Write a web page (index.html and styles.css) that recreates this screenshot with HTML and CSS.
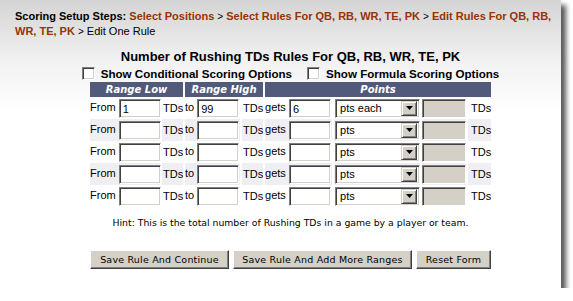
FILE: index.html
```html
<!DOCTYPE html>
<html>
<head>
<meta charset="utf-8">
<title>Edit One Rule</title>
<link rel="stylesheet" href="styles.css">
</head>
<body>
<div class="panel">
  <div class="steps">
    <b class="steps-label">Scoring Setup Steps:</b>
    <a class="step" href="#">Select Positions</a> <span class="sep">&gt;</span>
    <a class="step" href="#">Select Rules For QB, RB, WR, TE, PK</a> <span class="sep">&gt;</span>
    <a class="step" href="#">Edit Rules For QB, RB, WR, TE, PK</a> <span class="sep">&gt;</span>
    <span class="current">Edit One Rule</span>
  </div>

  <div class="content">
    <h1 class="title">Number of Rushing TDs Rules For QB, RB, WR, TE, PK</h1>

    <div class="options">
      <label class="option"><span class="checkbox"></span>Show Conditional Scoring Options</label>
      <label class="option"><span class="checkbox"></span>Show Formula Scoring Options</label>
    </div>

    <table class="rules">
      <colgroup>
        <col class="c-from"><col class="c-tds"><col class="c-to"><col class="c-tds2">
        <col class="c-gets"><col class="c-sel"><col class="c-dis"><col class="c-end">
      </colgroup>
      <thead>
        <tr>
          <th colspan="2">Range Low</th>
          <th colspan="2">Range High</th>
          <th colspan="4">Points</th>
        </tr>
      </thead>
      <tbody>
        <tr>
          <td>From <span class="field">1</span></td>
          <td class="unit">TDs</td>
          <td>to <span class="field">99</span></td>
          <td class="unit">TDs</td>
          <td>gets <span class="field">6</span></td>
          <td><span class="select"><span class="select-text">pts each</span><span class="select-btn"><svg width="7" height="4" viewBox="0 0 7 4"><path d="M0 0h7L3.5 4z" fill="#000"/></svg></span></span></td>
          <td><span class="field disabled"></span></td>
          <td class="unit end">TDs</td>
        </tr>
        <tr class="alt">
          <td>From <span class="field"></span></td>
          <td class="unit">TDs</td>
          <td>to <span class="field"></span></td>
          <td class="unit">TDs</td>
          <td>gets <span class="field"></span></td>
          <td><span class="select"><span class="select-text">pts</span><span class="select-btn"><svg width="7" height="4" viewBox="0 0 7 4"><path d="M0 0h7L3.5 4z" fill="#000"/></svg></span></span></td>
          <td><span class="field disabled"></span></td>
          <td class="unit end">TDs</td>
        </tr>
        <tr>
          <td>From <span class="field"></span></td>
          <td class="unit">TDs</td>
          <td>to <span class="field"></span></td>
          <td class="unit">TDs</td>
          <td>gets <span class="field"></span></td>
          <td><span class="select"><span class="select-text">pts</span><span class="select-btn"><svg width="7" height="4" viewBox="0 0 7 4"><path d="M0 0h7L3.5 4z" fill="#000"/></svg></span></span></td>
          <td><span class="field disabled"></span></td>
          <td class="unit end">TDs</td>
        </tr>
        <tr class="alt">
          <td>From <span class="field"></span></td>
          <td class="unit">TDs</td>
          <td>to <span class="field"></span></td>
          <td class="unit">TDs</td>
          <td>gets <span class="field"></span></td>
          <td><span class="select"><span class="select-text">pts</span><span class="select-btn"><svg width="7" height="4" viewBox="0 0 7 4"><path d="M0 0h7L3.5 4z" fill="#000"/></svg></span></span></td>
          <td><span class="field disabled"></span></td>
          <td class="unit end">TDs</td>
        </tr>
        <tr>
          <td>From <span class="field"></span></td>
          <td class="unit">TDs</td>
          <td>to <span class="field"></span></td>
          <td class="unit">TDs</td>
          <td>gets <span class="field"></span></td>
          <td><span class="select"><span class="select-text">pts</span><span class="select-btn"><svg width="7" height="4" viewBox="0 0 7 4"><path d="M0 0h7L3.5 4z" fill="#000"/></svg></span></span></td>
          <td><span class="field disabled"></span></td>
          <td class="unit end">TDs</td>
        </tr>
      </tbody>
    </table>

    <p class="hint">Hint: This is the total number of Rushing TDs in a game by a player or team.</p>

    <div class="buttons">
      <button class="btn btn-continue" type="button">Save Rule And Continue</button>
      <button class="btn btn-more" type="button">Save Rule And Add More Ranges</button>
      <button class="btn btn-reset" type="button">Reset Form</button>
    </div>
  </div>
</div>
</body>
</html>
```

FILE: styles.css
```css
html, body {
  margin: 0;
  padding: 0;
  background: #ffffff;
}

body {
  font-family: "Liberation Sans", Arial, sans-serif;
  font-size: 11px;
  color: #000;
}

.panel {
  width: 561px;
  height: 288px;
  background: linear-gradient(to bottom, #d4d4d4 0, #f1f1f1 60px, #ffffff 110px);
  box-shadow: 5px 5px 5px #5a5a5a;
  overflow: visible;
}

.steps {
  padding: 9px 0 0 15px;
  width: 540px;
  font-size: 11px;
  line-height: 14px;
}

.steps-label {
  font-weight: bold;
}

.step {
  color: #993300;
  font-weight: bold;
  text-decoration: none;
}

.sep {
  font-size: 10px;
}

.content {
  width: 561px;
  margin-left: 10px;
}

.title {
  margin: 10px 0 0;
  font-size: 13px;
  line-height: 16px;
  font-weight: bold;
  text-align: center;
}

.options {
  margin-top: 1px;
  display: flex;
  justify-content: center;
  gap: 15px;
  height: 16px;
  font-size: 11.6px;
  line-height: 16px;
  font-weight: bold;
}

.option {
  display: flex;
  align-items: center;
}

.checkbox {
  display: inline-block;
  box-sizing: border-box;
  width: 13px;
  height: 13px;
  margin-right: 6px;
  margin-top: -2px;
  background: #fff;
  border: 1px solid;
  border-color: #808080 #ffffff #ffffff #808080;
  box-shadow: inset 1px 1px #404040, inset -1px -1px #d4d0c8;
}

.rules {
  margin: 0 0 0 78px;
  border-collapse: separate;
  border-spacing: 2px 0;
  table-layout: fixed;
  width: 405px;
}

.c-from { width: 70px; }
.c-tds { width: 21px; }
.c-to { width: 55px; }
.c-tds2 { width: 21px; }
.c-gets { width: 67px; }
.c-sel { width: 86px; }
.c-dis { width: 44px; }
.c-end { width: 23px; }

.rules th {
  height: 15px;
  padding: 0;
  background: #525a7c;
  color: #fff;
  font-family: "DejaVu Sans", Verdana, sans-serif;
  font-size: 10px;
  font-weight: bold;
  font-style: italic;
  text-align: center;
  line-height: 15px;
}

.rules td {
  height: 22px;
  padding: 0;
  white-space: nowrap;
  font-size: 11px;
  vertical-align: middle;
}

.rules tr.alt td {
  background: #efeff3;
}

.rules td.unit {
  padding-left: 1px;
}

.rules td.end {
  padding-left: 3px;
}

.field {
  display: inline-block;
  box-sizing: border-box;
  width: 42px;
  height: 19px;
  vertical-align: middle;
  padding: 3px 0 0 3px;
  background: #fff;
  border: 1px solid;
  border-color: #808080 #ffffff #ffffff #808080;
  box-shadow: inset 1px 1px #404040, inset -1px -1px #d4d0c8;
  font-size: 11px;
  line-height: 13px;
}

.field.disabled {
  width: 44px;
  background: #d4d0c8;
}

.select {
  display: flex;
  align-items: center;
  justify-content: space-between;
  box-sizing: border-box;
  width: 85px;
  height: 19px;
  margin-left: 1px;
  padding: 2px;
  background: #fff;
  border: 1px solid;
  border-color: #808080 #ffffff #ffffff #808080;
  box-shadow: inset 1px 1px #404040, inset -1px -1px #d4d0c8;
}

.select-text {
  padding-left: 2px;
  font-size: 11px;
  line-height: 13px;
}

.select-btn {
  display: flex;
  align-items: center;
  justify-content: center;
  box-sizing: border-box;
  width: 16px;
  height: 15px;
  background: #d4d0c8;
  border: 1px solid;
  border-color: #d4d0c8 #404040 #404040 #d4d0c8;
  box-shadow: inset 1px 1px #ffffff, inset -1px -1px #808080;
}

.hint {
  margin: 10px 0 0;
  text-align: center;
  font-family: "DejaVu Sans", Verdana, sans-serif;
  font-size: 9.3px;
  line-height: 12px;
}

.buttons {
  margin-top: 21px;
  display: flex;
  justify-content: center;
  gap: 4px;
}

.btn {
  box-sizing: border-box;
  height: 19px;
  margin: 0;
  padding: 0;
  background: #d4d0c8;
  border: 1px solid;
  border-color: #ffffff #404040 #404040 #ffffff;
  box-shadow: inset -1px -1px #808080;
  font-family: "DejaVu Sans", Verdana, sans-serif;
  font-size: 9.5px;
  color: #000;
  letter-spacing: 0.2px;
}

.btn-continue { width: 139px; }
.btn-more { width: 179px; }
.btn-reset { width: 75px; }
```
